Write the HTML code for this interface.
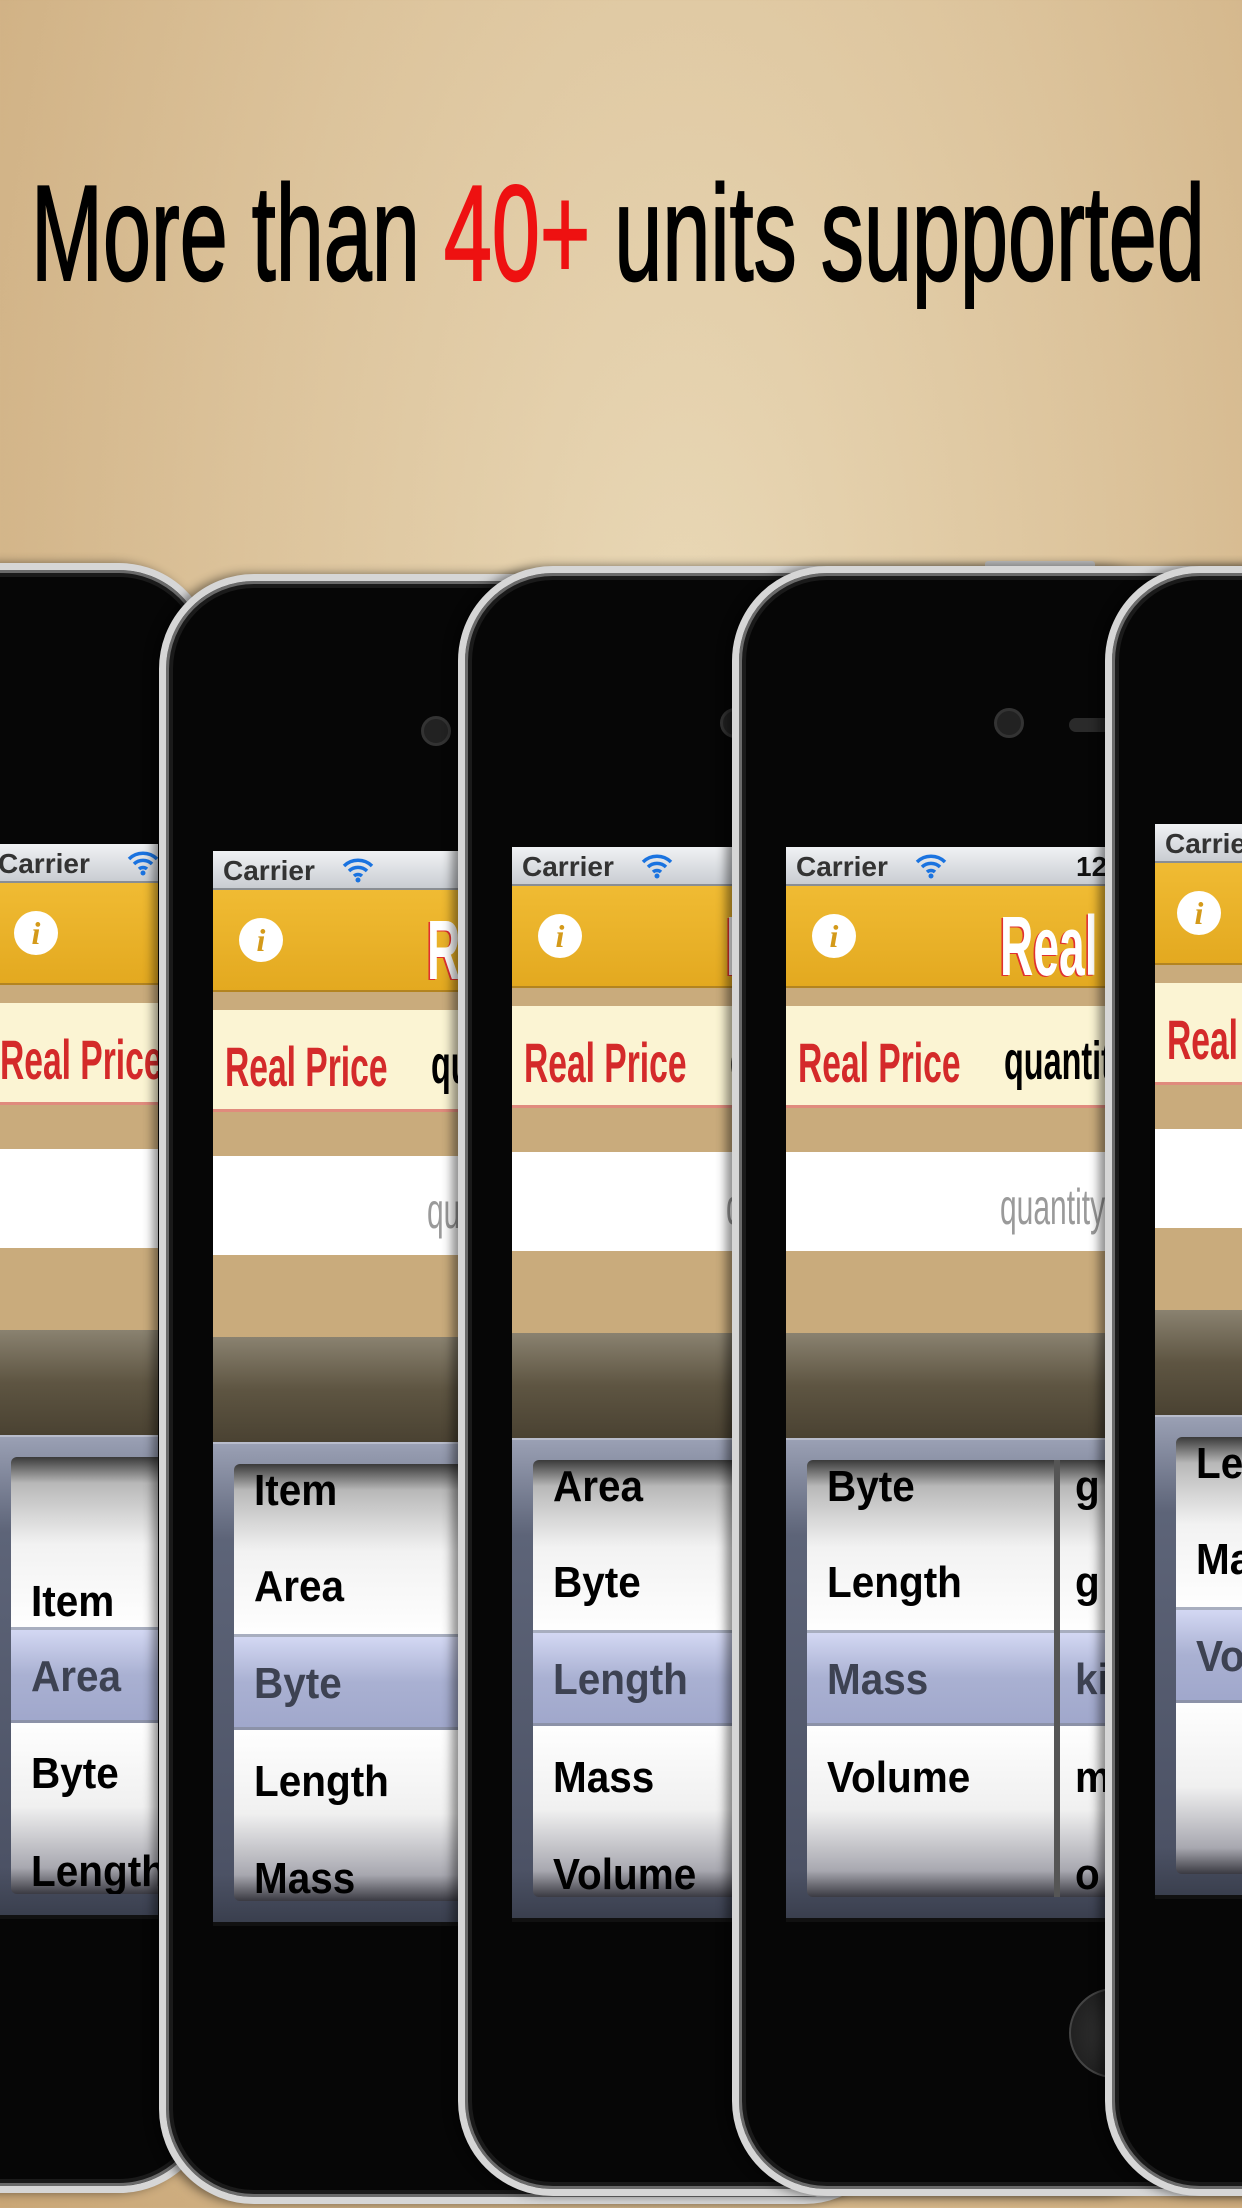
<!DOCTYPE html>
<html><head><meta charset="utf-8"><style>
*{margin:0;padding:0;box-sizing:border-box}
body{width:1242px;height:2208px;overflow:hidden;position:relative;font-family:"Liberation Sans",sans-serif;
background:radial-gradient(ellipse at 55% 30%,#e9d8b6 0%,#dcc39b 45%,#c9a676 100%);}
.h{position:absolute;left:31px;top:155px;font-size:136px;white-space:nowrap;transform:scaleX(.635);transform-origin:left top;color:#000;letter-spacing:0px;-webkit-text-stroke:2px #000}
.h b{color:#ee1111;font-weight:normal;-webkit-text-stroke:2px #ee1111}
.ph{position:absolute;width:740px;height:1630px;border-radius:95px;background:#060606;border:7px solid #d6d6d6;
box-shadow:inset 0 0 0 3px #6a6a6a,inset 0 0 0 7px #1a1a1a,-6px 0 10px rgba(0,0,0,.45)}
.cam{position:absolute;width:30px;height:30px;border-radius:50%;background:#222;border:3px solid #333;top:135px;left:255px}
.spk{position:absolute;width:50px;height:14px;border-radius:7px;background:#2a2a2a;top:145px;left:330px}
.btn{position:absolute;top:-12px;width:110px;height:8px;background:#bbb;border-radius:3px}
.sc{position:absolute;left:47px;width:630px;height:1075px;overflow:hidden;background:#111}
.sb{position:absolute;left:0;top:0;width:630px;height:39px;background:linear-gradient(#f0f2f4,#c9cdd2);border-bottom:2px solid #8a8e93}
.sb span{position:absolute;left:10px;top:4px;font-size:28px;color:#333;font-weight:bold}
.wifi{position:absolute;left:128px;top:6px}
.hd{position:absolute;top:39px;left:0;width:630px;height:102px;background:linear-gradient(#f0bb33,#e3a920);border-bottom:2px solid #b38420}
.ic{position:absolute;left:26px;top:28px;width:44px;height:44px;border-radius:50%;background:#fff;color:#d49a1a;font:italic bold 32px "Liberation Serif",serif;text-align:center;line-height:44px}
.tt{position:absolute;left:214px;top:12px;font-size:84px;font-weight:bold;color:#fff;transform:scaleX(.55);transform-origin:left top;white-space:nowrap;text-shadow:-3px 1px 0 #e03030}
.tan{position:absolute;left:0;width:630px;background:#c9ab7c}
.cr{position:absolute;top:159px;left:0;width:630px;height:102px;background:#fbf4d3;border-bottom:3px solid #e08b7d}
.cr i{position:absolute;left:12px;top:24px;font-style:normal;font-weight:bold;font-size:56px;color:#d42a2a;transform:scaleX(.6);transform-origin:left top;white-space:nowrap}
.cr u{position:absolute;left:218px;top:24px;text-decoration:none;font-weight:bold;font-size:54px;color:#000;transform:scaleX(.6);transform-origin:left top}
.wh{position:absolute;top:305px;left:0;width:630px;height:99px;background:#fff}
.wh span{position:absolute;left:214px;top:26px;font-size:50px;color:#9a9a9a;transform:scaleX(.6);transform-origin:left top}
.dk{position:absolute;top:486px;left:0;width:630px;height:105px;background:linear-gradient(#8a8270,#5e5542 50%,#4a4232)}
.pf{position:absolute;top:591px;left:0;width:630px;height:480px;background:linear-gradient(#9aa0b4,#5d6478 20%,#4c5265 90%,#3a3f4e);border-top:2px solid #b8bccb}
.wl{position:absolute;top:20px;left:21px;width:600px;height:437px;border-radius:6px;overflow:hidden;
background:linear-gradient(#3a3a3a 0%,#b8b8b8 6%,#f2f2f2 20%,#fff 40%,#fff 60%,#f0f0f0 80%,#a8a8b0 94%,#3a3a42 100%)}
.sel{position:absolute;left:0;top:170px;width:100%;height:96px;background:linear-gradient(rgba(200,206,240,.8),rgba(160,168,205,.9) 50%,rgba(150,158,198,.9));border-top:3px solid #a8aebf;border-bottom:3px solid #8c92a8}
.r{position:absolute;left:20px;font-weight:bold;font-size:44px;color:#000;white-space:nowrap;transform:scaleX(.92);transform-origin:left top}
.r.s{color:#3d4252}
.col2{position:absolute;left:247px;top:0;width:6px;height:100%;background:#555}
</style></head><body>
<div class="h">More than <b>40+</b> units supported</div>

<!-- Phone 1 -->
<div class="ph" style="left:-526px;top:563px;z-index:1">
<div class="sc" style="top:274px">
<div class="tan" style="top:141px;height:470px"></div>
<div class="sb"><span style="left:470px">Carrier</span><svg class="wifi" style="left:598px" width="34" height="26" viewBox="0 0 34 26"><path d="M3 9a20 20 0 0 1 28 0M8 14a13 13 0 0 1 18 0M13 19a6 6 0 0 1 8 0" stroke="#1a73e0" stroke-width="3.5" fill="none"/><circle cx="17" cy="23" r="2.5" fill="#1a73e0"/></svg></div>
<div class="hd"><div class="ic" style="left:486px">i</div></div>
<div class="cr"><i style="left:472px">Real Price</i></div>
<div class="wh"></div><div class="dk"></div>
<div class="pf"><div class="wl" style="left:483px"><div class="sel"></div>
<div class="r" style="top:120px">Item</div><div class="r s" style="top:195px">Area</div><div class="r" style="top:292px">Byte</div><div class="r" style="top:390px">Length</div></div></div>
</div></div>

<!-- Phone 2 -->
<div class="ph" style="left:159px;top:574px;z-index:2">
<div class="btn" style="left:480px"></div>
<div class="cam"></div>
<div class="sc" style="top:270px">
<div class="tan" style="top:141px;height:470px"></div>
<div class="sb"><span>Carrier</span><svg class="wifi" width="34" height="26" viewBox="0 0 34 26"><path d="M3 9a20 20 0 0 1 28 0M8 14a13 13 0 0 1 18 0M13 19a6 6 0 0 1 8 0" stroke="#1a73e0" stroke-width="3.5" fill="none"/><circle cx="17" cy="23" r="2.5" fill="#1a73e0"/></svg></div>
<div class="hd"><div class="ic">i</div><div class="tt">Real Price</div></div>
<div class="cr"><i>Real Price</i><u>quantity</u></div>
<div class="wh"><span>quantity</span></div><div class="dk"></div>
<div class="pf"><div class="wl"><div class="sel"></div>
<div class="r" style="top:2px">Item</div><div class="r" style="top:98px">Area</div><div class="r s" style="top:195px">Byte</div><div class="r" style="top:293px">Length</div><div class="r" style="top:390px">Mass</div></div></div>
</div></div>

<!-- Phone 3 -->
<div class="ph" style="left:458px;top:566px;z-index:3">
<div class="btn" style="left:520px"></div>
<div class="cam"></div>
<div class="sc" style="top:274px">
<div class="tan" style="top:141px;height:470px"></div>
<div class="sb"><span>Carrier</span><svg class="wifi" width="34" height="26" viewBox="0 0 34 26"><path d="M3 9a20 20 0 0 1 28 0M8 14a13 13 0 0 1 18 0M13 19a6 6 0 0 1 8 0" stroke="#1a73e0" stroke-width="3.5" fill="none"/><circle cx="17" cy="23" r="2.5" fill="#1a73e0"/></svg></div>
<div class="hd"><div class="ic">i</div><div class="tt">Real Price</div></div>
<div class="cr"><i>Real Price</i><u>quantity</u></div>
<div class="wh"><span>quantity</span></div><div class="dk"></div>
<div class="pf"><div class="wl"><div class="sel"></div>
<div class="r" style="top:2px">Area</div><div class="r" style="top:98px">Byte</div><div class="r s" style="top:195px">Length</div><div class="r" style="top:293px">Mass</div><div class="r" style="top:390px">Volume</div></div></div>
</div></div>

<!-- Phone 4 -->
<div class="ph" style="left:732px;top:566px;z-index:4">
<div class="btn" style="left:520px"></div>
<div class="cam"></div><div class="spk"></div>
<div style="position:absolute;left:330px;top:1415px;width:90px;height:90px;border-radius:50%;background:radial-gradient(#333,#1a1a1a);border:2px solid #444"></div>
<div class="sc" style="top:274px">
<div class="tan" style="top:141px;height:470px"></div>
<div class="sb"><span>Carrier</span><svg class="wifi" width="34" height="26" viewBox="0 0 34 26"><path d="M3 9a20 20 0 0 1 28 0M8 14a13 13 0 0 1 18 0M13 19a6 6 0 0 1 8 0" stroke="#1a73e0" stroke-width="3.5" fill="none"/><circle cx="17" cy="23" r="2.5" fill="#1a73e0"/></svg><span style="left:290px;color:#111">12:00 PM</span></div>
<div class="hd"><div class="ic">i</div><div class="tt">Real Price</div></div>
<div class="cr"><i>Real Price</i><u>quantity</u></div>
<div class="wh"><span>quantity</span></div><div class="dk"></div>
<div class="pf"><div class="wl"><div class="sel"></div><div class="col2"></div>
<div class="r" style="top:2px">Byte</div><div class="r" style="top:98px">Length</div><div class="r s" style="top:195px">Mass</div><div class="r" style="top:293px">Volume</div>
<div class="r" style="left:268px;top:2px">g</div><div class="r" style="left:268px;top:98px">g</div><div class="r s" style="left:268px;top:195px">ki</div><div class="r" style="left:268px;top:293px">m</div><div class="r" style="left:268px;top:390px">o</div></div></div>
</div></div>

<!-- Phone 5 -->
<div class="ph" style="left:1105px;top:566px;z-index:5">
<div class="sc" style="top:251px;left:43px">
<div class="tan" style="top:141px;height:470px"></div>
<div class="sb"><span>Carrier</span></div>
<div class="hd"><div class="ic" style="left:22px">i</div></div>
<div class="cr"><i>Real Price</i></div>
<div class="wh"></div><div class="dk"></div>
<div class="pf"><div class="wl"><div class="sel"></div>
<div class="r" style="top:2px">Length</div><div class="r" style="top:98px">Mass</div><div class="r s" style="top:195px">Volume</div></div></div>
</div></div>
</body></html>
